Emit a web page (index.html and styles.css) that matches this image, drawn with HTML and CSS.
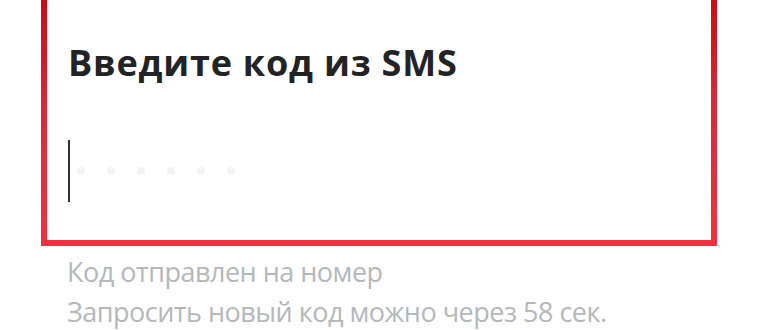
FILE: index.html
```html
<!DOCTYPE html>
<html lang="ru">
<head>
    <meta charset="UTF-8">
    <meta name="viewport" content="width=device-width, initial-scale=1.0">
    <title>Код из SMS</title>
    <link rel="stylesheet" href="styles.css">
</head>
<body>
    <div class="sms-box">
        <h1 class="sms-title">Введите код из SMS</h1>
        <div class="code-field">
            <div class="caret"></div> <!-- blinking cursor -->
            <div class="code-dots">
                <span></span><span></span><span></span><span></span><span></span><span></span>
            </div>
        </div>
    </div>
    <div class="sms-info">
        <p>Код отправлен на номер</p>
        <p>Запросить новый код можно через 58 сек.</p>
    </div>
</body>
</html>
```

FILE: styles.css
```css
body { margin: 0; padding: 0; background: #fff; font-family: 'Open Sans', 'Liberation Sans', sans-serif; overflow: hidden; }
.sms-box {
    width: 676px;
    height: 266px;
    margin: -20px 0 0 41px;
    box-sizing: border-box;
    border: 6px solid #e3303e;
    border-image: linear-gradient(to bottom, #c20a0a, #d8283a 45%, #e3323f 80%, #f0303f) 1;
    padding: 56px 0 0 21px;
}
.sms-title { margin: 0; font-size: 36px; line-height: 42px; font-weight: 700; color: #222324; letter-spacing: 0.8px; }
.code-field { display: flex; align-items: center; height: 62px; margin-top: 56px; }
.caret { width: 2px; height: 62px; background: #333; }
.code-dots { display: flex; gap: 22px; margin-left: 7px; }
.code-dots span { width: 8px; height: 8px; border-radius: 50%; background: #f3f3f3; }
.sms-info { margin: 6px 0 0 67px; color: #b3b8bb; font-size: 27px; line-height: 40px; letter-spacing: -0.5px; }
.sms-info p { margin: 0; }
```
